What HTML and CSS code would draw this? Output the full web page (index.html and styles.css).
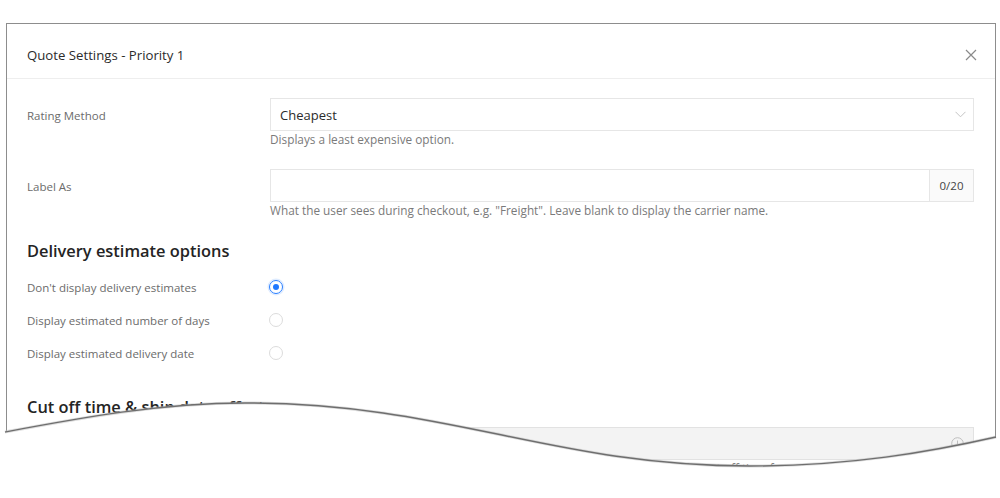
FILE: index.html
```html
<!DOCTYPE html>
<html lang="en">
<head>
<meta charset="utf-8">
<title>Quote Settings - Priority 1</title>
<link rel="stylesheet" href="styles.css">
</head>
<body>
<div class="modal">
  <div class="modal-header">
    <span class="modal-title">Quote Settings - Priority 1</span>
    <svg class="close" width="12" height="12" viewBox="0 0 12 12"><path d="M1 1L11 11M11 1L1 11" stroke="#8a8a8a" stroke-width="1.2" fill="none"/></svg>
  </div>
  <div class="modal-body">
    <div class="form-row">
      <div class="label">Rating Method</div>
      <div class="field">
        <div class="select">
          <span class="select-value">Cheapest</span>
          <svg class="chevron" width="11" height="7" viewBox="0 0 11 7"><path d="M0.5 0.8L5.5 5.8L10.5 0.8" stroke="#c4c4c4" stroke-width="1" fill="none"/></svg>
        </div>
        <div class="help">Displays a least expensive option.</div>
      </div>
    </div>
    <div class="form-row row-gap">
      <div class="label">Label As</div>
      <div class="field">
        <div class="input-group">
          <div class="input"></div>
          <div class="addon">0/20</div>
        </div>
        <div class="help">What the user sees during checkout, e.g. "Freight". Leave blank to display the carrier name.</div>
      </div>
    </div>
    <h2 class="section-title">Delivery estimate options</h2>
    <div class="radio-row first">
      <div class="label">Don't display delivery estimates</div>
      <span class="radio checked"></span>
    </div>
    <div class="radio-row">
      <div class="label">Display estimated number of days</div>
      <span class="radio"></span>
    </div>
    <div class="radio-row">
      <div class="label">Display estimated delivery date</div>
      <span class="radio"></span>
    </div>
    <h2 class="section-title second">Cut off time &amp; ship date offset</h2>
    <div class="form-row">
      <div class="label">Cut off time</div>
      <div class="field">
        <div class="input disabled">
          <svg class="info" width="13" height="13" viewBox="0 0 13 13"><circle cx="6.5" cy="6.5" r="5.8" stroke="#bdbdbd" stroke-width="1" fill="none"/><path d="M6.5 3.5V7" stroke="#bdbdbd" stroke-width="1"/></svg>
        </div>
        <div class="help center">Enter the cut off time for same day shipping</div>
      </div>
    </div>
  </div>
</div>
<svg class="tear" width="1000" height="498" viewBox="0 0 1000 498">
  <path d="M0 433 L5 432 C80 418 160 403 245 403 C450 403 550 466 750 466 C850 466 930 452 1000 437 L1000 498 L0 498 Z" fill="#ffffff"/>
  <path d="M5 432 C80 418 160 403 245 403 C450 403 550 466 750 466 C850 466 930 452 996 437" stroke="#bbbbbb" stroke-width="3" fill="none" opacity="0.5"/>
  <path d="M5 432 C80 418 160 403 245 403 C450 403 550 466 750 466 C850 466 930 452 996 437" stroke="#6e6e6e" stroke-width="1.4" fill="none"/>
</svg>
</body>
</html>
```
FILE: styles.css
```css
html, body {
  margin: 0;
  padding: 0;
  background: #ffffff;
  width: 1000px;
  height: 498px;
  overflow: hidden;
  font-family: "Open Sans", "Liberation Sans", sans-serif;
  color: #333;
}

.modal {
  margin: 23px 0 0 6px;
  width: 988px;
  height: 480px;
  border: 1px solid #8d8d8d;
  border-bottom: none;
  background: #fff;
}

.modal-header {
  height: 55px;
  box-sizing: border-box;
  display: flex;
  align-items: center;
  justify-content: space-between;
  padding: 8px 18px 0 20px;
  border-bottom: 1px solid #eeeeee;
}

.modal-title {
  font-size: 13.2px;
  color: #2b2b2b;
}

.close {
  display: block;
}

.modal-body {
  padding: 19px 21px 0 20px;
}

.form-row {
  display: grid;
  grid-template-columns: 243px 1fr;
}

.row-gap {
  margin-top: 21px;
}

.label {
  font-size: 11.5px;
  color: #6b6b6b;
  line-height: 33px;
  height: 33px;
  padding-top: 1px;
  box-sizing: border-box;
}

.field {
  display: flex;
  flex-direction: column;
}

.select {
  height: 33px;
  box-sizing: border-box;
  border: 1px solid #e6e6e6;
  display: flex;
  align-items: center;
  justify-content: space-between;
  padding: 0 7px 0 9px;
}

.select-value {
  font-size: 13px;
  color: #2b2b2b;
}

.chevron {
  display: block;
}

.help {
  font-size: 11.8px;
  color: #7a7a7a;
  line-height: 17px;
  height: 17px;
}

.help.center {
  padding-left: 380px;
}

.input-group {
  display: flex;
  height: 33px;
  box-sizing: border-box;
  border: 1px solid #e6e6e6;
}

.input-group .input {
  flex: 1;
  border: none;
}

.input {
  height: 33px;
  box-sizing: border-box;
  border: 1px solid #e6e6e6;
}

.addon {
  width: 43px;
  border-left: 1px solid #e6e6e6;
  background: #fafafa;
  font-size: 11.5px;
  color: #444;
  display: flex;
  align-items: center;
  justify-content: center;
}

.section-title {
  margin: 21px 0 0 0;
  font-size: 16.4px;
  font-weight: 600;
  line-height: 22px;
  color: #242424;
}

.section-title.second {
  margin-top: 27px;
  margin-bottom: 9px;
}

.radio-row {
  display: grid;
  grid-template-columns: 243px 1fr;
  align-items: center;
  height: 33px;
}

.radio-row.first {
  margin-top: 8px;
}

.radio-row .label {
  line-height: 33px;
}

.radio {
  width: 14px;
  height: 14px;
  box-sizing: border-box;
  border: 1px solid #dcdcdc;
  border-radius: 50%;
  margin-left: -1px;
  display: flex;
  align-items: center;
  justify-content: center;
}

.radio.checked {
  border: 1.5px solid #2a7fff;
  box-shadow: 0 0 0 1.5px rgba(42, 127, 255, 0.15);
}

.radio.checked::after {
  content: "";
  width: 6px;
  height: 6px;
  border-radius: 50%;
  background: #1f78ff;
}

.input.disabled {
  background: #f3f3f3;
  border-color: #e2e2e2;
  display: flex;
  align-items: center;
  justify-content: flex-end;
  padding-right: 9px;
}

.info {
  display: block;
}

.tear {
  position: absolute;
  left: 0;
  top: 0;
  pointer-events: none;
}
```
